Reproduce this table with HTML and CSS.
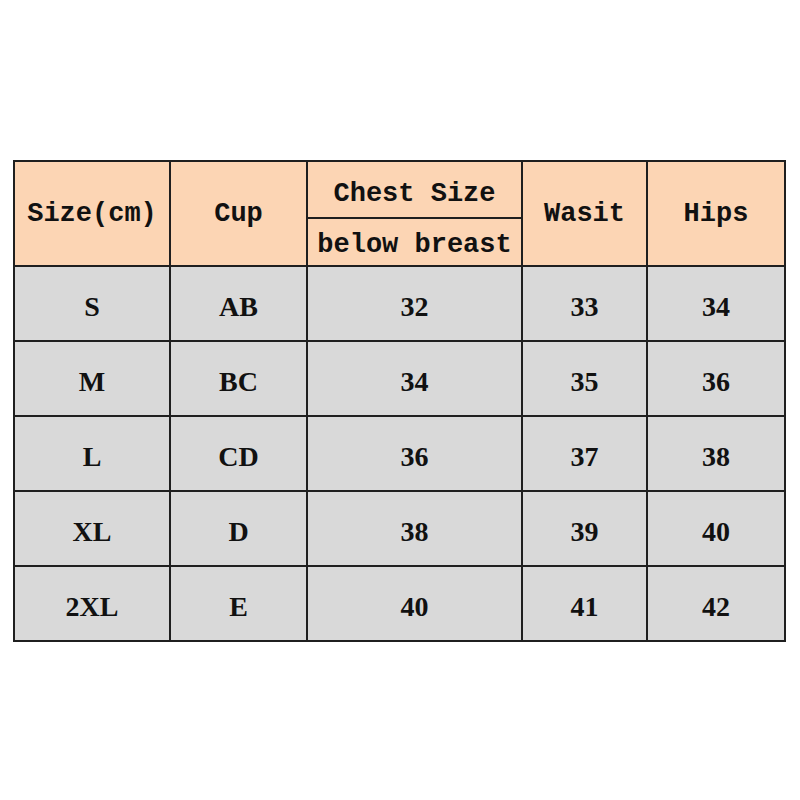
FILE: index.html
```html
<!DOCTYPE html>
<html>
<head>
<meta charset="utf-8">
<link rel="stylesheet" href="styles.css">
</head>
<body>
<div class="page">
  <table class="size-table">
    <colgroup>
      <col class="c1"><col class="c2"><col class="c3"><col class="c4"><col class="c5">
    </colgroup>
    <thead>
      <tr class="h1">
        <th rowspan="2" class="tall">Size(cm)</th>
        <th rowspan="2" class="tall">Cup</th>
        <th class="chest">Chest Size</th>
        <th rowspan="2" class="tall">Wasit</th>
        <th rowspan="2" class="tall">Hips</th>
      </tr>
      <tr class="h2">
        <th class="below">below breast</th>
      </tr>
    </thead>
    <tbody>
      <tr><td>S</td><td>AB</td><td>32</td><td>33</td><td>34</td></tr>
      <tr><td>M</td><td>BC</td><td>34</td><td>35</td><td>36</td></tr>
      <tr><td>L</td><td>CD</td><td>36</td><td>37</td><td>38</td></tr>
      <tr><td>XL</td><td>D</td><td>38</td><td>39</td><td>40</td></tr>
      <tr><td>2XL</td><td>E</td><td>40</td><td>41</td><td>42</td></tr>
    </tbody>
  </table>
</div>
</body>
</html>
```

FILE: styles.css
```css
html, body {
  margin: 0;
  padding: 0;
  background: #ffffff;
}

.page {
  padding: 160px 0 0 13px;
}

.size-table {
  border-collapse: collapse;
  table-layout: fixed;
  width: 771px;
  border: 2px solid #1f1f1f;
}

.c1 { width: 156px; }
.c2 { width: 137px; }
.c3 { width: 215px; }
.c4 { width: 125px; }
.c5 { width: 138px; }

.size-table th,
.size-table td {
  border: 2px solid #1f1f1f;
  padding: 0;
  text-align: center;
  vertical-align: middle;
  color: #111111;
}

.size-table th {
  background: #fcd5b4;
  font-family: "Liberation Mono", monospace;
  font-weight: bold;
  font-size: 27px;
  white-space: nowrap;
}

.h1 { height: 57px; }
.h2 { height: 48px; }

.tall {
  padding-top: 4px;
}

.size-table th.chest {
  padding-top: 9px;
}

.size-table th.below {
  padding-top: 6px;
}

.size-table td {
  background: #d9d9d9;
  font-family: "Liberation Serif", serif;
  font-weight: bold;
  font-size: 28px;
  height: 67px;
  padding-top: 6px;
}
```
